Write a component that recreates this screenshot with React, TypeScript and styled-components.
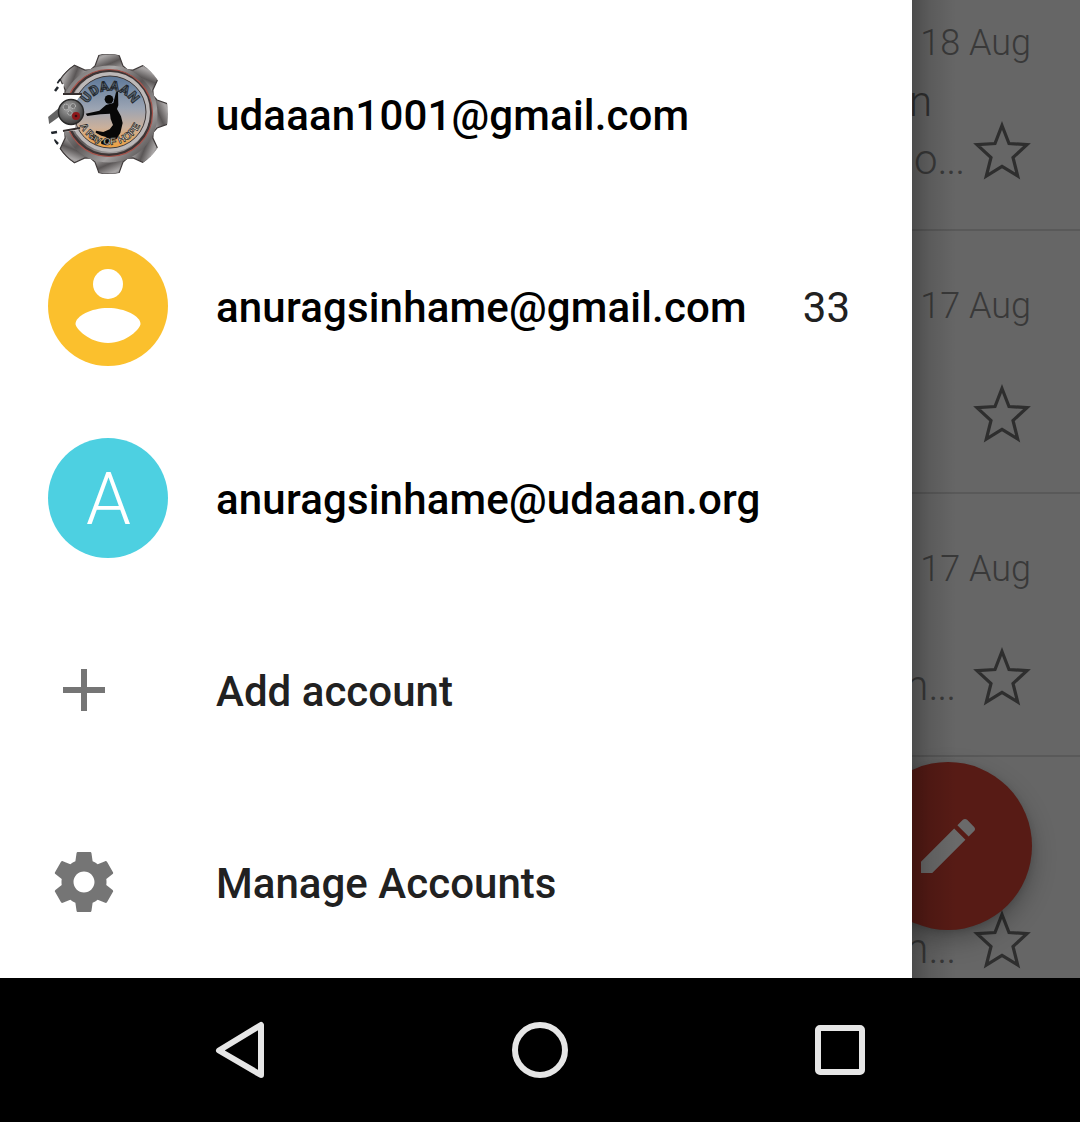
import React from "react";
import styled, { createGlobalStyle } from "styled-components";

const GlobalStyle = createGlobalStyle`
  *, *::before, *::after { box-sizing: border-box; }
  body { margin: 0; background: #fff; font-family: Roboto, "Liberation Sans", sans-serif; }
`;

const Screen = styled.div`
  width: 1080px;
  height: 1122px;
  display: flex;
  flex-direction: column;
  overflow: hidden;
`;

const Content = styled.main`
  display: flex;
  height: 978px;
`;

const Drawer = styled.nav`
  width: 912px;
  flex: none;
  padding-top: 18px;
  background: #fff;
`;

const Row = styled.div`
  display: flex;
  align-items: center;
  height: 192px;
  padding: 0 62px 0 48px;
`;

const IconSlot = styled.div`
  width: 168px;
  flex: none;
  display: flex;
  align-items: center;
  svg { display: block; overflow: visible; }
`;

const Avatar = styled.div<{ $color?: string }>`
  width: 120px;
  height: 120px;
  border-radius: 50%;
  overflow: hidden;
  display: flex;
  align-items: center;
  justify-content: center;
  background: ${(p) => p.$color || "transparent"};
`;

const Initial = styled.span`
  padding: 3px 0 0 1px;
  color: #fff;
  font-size: 72px;
  font-weight: 300;
  line-height: 84px;
`;

const Label = styled.span<{ $action?: boolean }>`
  flex: 1;
  padding-top: 3px;
  font-size: 42px;
  font-weight: 500;
  line-height: 50px;
  letter-spacing: ${(p) => (p.$action ? "0.03px" : "0.17px")};
  white-space: nowrap;
  color: ${(p) => (p.$action ? "#212121" : "#000")};
`;

const Count = styled.span`
  padding-top: 3px;
  font-size: 42px;
  line-height: 50px;
  color: #212121;
`;

const Inbox = styled.section`
  position: relative;
  width: 168px;
  height: 978px;
  overflow: hidden;
  background: #666;
`;

const MailList = styled.div`
  margin-top: -32px;
`;

const Mail = styled.article`
  height: 263px;
  padding: 53px 49px 0 0;
  border-bottom: 2px solid #595959;
  color: #393939;
  font-weight: 300;
  white-space: nowrap;
`;

const DateText = styled.div`
  height: 44px;
  font-size: 36px;
  line-height: 44px;
  text-align: right;
`;

const Subject = styled.div`
  height: 56px;
  padding: 12px 99px 0 0;
  display: flex;
  justify-content: flex-end;
  font-size: 42px;
  line-height: 50px;
  color: #303030;
`;

const SnippetLine = styled.div`
  display: flex;
  align-items: flex-start;
  justify-content: flex-end;
  height: 60px;
  svg { display: block; flex: none; }
`;

const Snippet = styled.span<{ $gap: number }>`
  padding-top: 14px;
  margin-right: ${(p) => p.$gap}px;
  font-size: 42px;
  line-height: 50px;
`;

const Dots = styled.span`
  letter-spacing: -1.2px;
`;

const Fab = styled.div`
  position: absolute;
  right: 48px;
  bottom: 48px;
  width: 168px;
  height: 168px;
  border-radius: 50%;
  background: #571b15;
  display: flex;
  align-items: center;
  justify-content: center;
  box-shadow: 0 10px 24px rgba(0, 0, 0, 0.28), 0 2px 6px rgba(0, 0, 0, 0.12);
`;

const EdgeShadow = styled.div`
  position: absolute;
  inset: 0 auto 0 0;
  width: 44px;
  background: linear-gradient(to right, rgba(0, 0, 0, 0.26), rgba(0, 0, 0, 0.11) 40%, rgba(0, 0, 0, 0));
`;

const NavBar = styled.footer`
  height: 144px;
  background: #000;
  display: flex;
  align-items: center;
  justify-content: space-between;
  padding: 0 204px;
`;

const Star = () => (
  <svg width="60" height="60" viewBox="0 0 60 60" fill="none" stroke="#2e2e2e" strokeWidth="3.2">
    <path d="M31 4.500 38 22.500 56 23.700 42 36.500 46.700 55 31 45.400 15.300 55 20 36.500 6 23.700 24 22.500Z" />
  </svg>
);

const GearAvatar = () => (
  <svg width="120" height="120" viewBox="0 0 120 120">
    <defs>
      <linearGradient id="metal" x1="0" y1="0" x2="1" y2="1">
        <stop offset="0" stopColor="#6b6868" />
        <stop offset=".25" stopColor="#aaa7a7" />
        <stop offset=".5" stopColor="#5a5656" />
        <stop offset=".75" stopColor="#a29f9f" />
        <stop offset="1" stopColor="#444040" />
      </linearGradient>
      <linearGradient id="sky" x1="0" y1="0" x2="0" y2="1">
        <stop offset="0" stopColor="#5d7899" />
        <stop offset=".45" stopColor="#9ba4b3" />
        <stop offset=".72" stopColor="#cbb09b" />
        <stop offset="1" stopColor="#f0a03f" />
      </linearGradient>
      <radialGradient id="ball" cx=".4" cy=".35" r=".7">
        <stop offset="0" stopColor="#aaa" />
        <stop offset="1" stopColor="#353535" />
      </radialGradient>
      <path id="arcTop" d="M36.500 62 A25.500 25.500 0 1 1 87.500 62" />
      <path id="arcBottom" d="M29 58 A33 33 0 0 0 95 58" />
    </defs>
    {[0, 45, 90, 135, 180, 225, 315].map((a) => (
      <path key={a} d="M51 1 Q61 -1 71 1 L75 12 84 20 H38 L47 12Z" transform={`rotate(${a} 61 60)`} fill="url(#metal)" stroke="#3f3a3a" strokeWidth="1.2" />
    ))}
    <circle cx="61" cy="60" r="42" fill="none" stroke="url(#metal)" strokeWidth="13" />
    <circle cx="61" cy="59" r="42" fill="none" stroke="#3e3535" strokeWidth="3" />
    <circle cx="61" cy="59" r="43.500" fill="none" stroke="#a6534b" strokeWidth="1.200" />
    <circle cx="62" cy="58" r="38" fill="none" stroke="#bcb8b8" strokeWidth="4" />
    <circle cx="62" cy="58" r="36" fill="url(#sky)" stroke="#3e3838" strokeWidth="1" />
    <path d="M0 32 16 30 15 40H34Q30 44 28 48L27 74 32 74 30 76 15 78 12 88H0Z" fill="#fff" />
    <path d="M15 40H34M15 77 32 74" stroke="#352f2f" strokeWidth="2" fill="none" />
    <path d="M0 63 11 54 15 60 4 68 1 70Z" fill="#646464" />
    <path d="M9 29 12 25M7 37 10 33M3 79 9 78M6 86 10 90" stroke="#20252b" strokeWidth="2.500" />
    <circle cx="23" cy="58" r="12.500" fill="url(#ball)" stroke="#292929" strokeWidth="1.500" />
    <g fill="#777" stroke="#c7c7c7" strokeWidth="1" strokeDasharray="1.200 .6">
      <circle cx="18" cy="53" r="2.800" />
      <circle cx="25" cy="52" r="2.500" />
      <circle cx="22" cy="59" r="2.200" />
    </g>
    <circle cx="28" cy="62" r="4" fill="#8d171b" />
    <circle cx="28" cy="62" r="1.300" fill="#321012" />
    <text fontFamily="Roboto, sans-serif" fontSize="13.500" fontWeight="900" fill="#56636f" stroke="#20252b" strokeWidth=".8" textAnchor="middle">
      <textPath href="#arcTop" startOffset="50%">UDAAAN</textPath>
    </text>
    <g transform="translate(-10 -10) scale(.33333)" fill="#070707">
      <circle cx="213" cy="166" r="13" />
      <path d="M234 145 240 143 241 184 237 195 249 217 254 237 247 267 235 286 216 289 204 304 190 300 189 293 207 280 190 275 173 266 174 260 196 264 215 256 225 243 218 225 216 209 187 211 148 216 143 209 184 200 204 183 226 177Z" />
    </g>
    <text fontFamily="Liberation Sans, sans-serif" fontSize="10" fontWeight="700" fill="#f4eadf" stroke="#151515" strokeWidth=".65" textAnchor="middle">
      <textPath href="#arcBottom" startOffset="50%">A Ray OF HOPE</textPath>
    </text>
  </svg>
);

const mails = [
  { date: "18 Aug", subject: "n", letter: "o", gap: 7 },
  { date: "17 Aug", subject: "", letter: "", gap: 0 },
  { date: "17 Aug", subject: "", letter: "n", gap: 16 },
  { date: "", subject: "", letter: "n", gap: 16 },
];

export default function App() {
  return (
    <>
      <GlobalStyle />
      <Screen>
        <Content>
          <Drawer>
            <Row>
              <IconSlot><Avatar><GearAvatar /></Avatar></IconSlot>
              <Label>udaaan1001@gmail.com</Label>
            </Row>
            <Row>
              <IconSlot>
                <Avatar $color="#fbc02d">
                  <svg width="120" height="120" viewBox="0 0 120 120" fill="#fff">
                    <circle cx="60" cy="38" r="15" />
                    <path d="M60 62C77 62 92.500 70 92.500 78C92.500 82 79 97 60 97S27.500 82 27.500 78C27.500 70 43 62 60 62Z" />
                  </svg>
                </Avatar>
              </IconSlot>
              <Label>anuragsinhame@gmail.com</Label>
              <Count>33</Count>
            </Row>
            <Row>
              <IconSlot><Avatar $color="#4dd0e1"><Initial>A</Initial></Avatar></IconSlot>
              <Label>anuragsinhame@udaaan.org</Label>
            </Row>
            <Row>
              <IconSlot>
                <svg width="72" height="72" viewBox="0 0 24 24" fill="#757575">
                  <path d="M19 13h-6v6h-2v-6H5v-2h6V5h2v6h6v2z" />
                </svg>
              </IconSlot>
              <Label $action>Add account</Label>
            </Row>
            <Row>
              <IconSlot>
                <svg width="72" height="72" viewBox="0 0 24 24" fill="#757575">
                  <path d="M19.430 12.980c.04-.32.07-.64.07-.98s-.03-.66-.07-.98l2.110-1.650c.19-.15.24-.42.12-.64l-2-3.460c-.12-.22-.39-.3-.61-.22l-2.490 1c-.52-.4-1.080-.73-1.690-.98l-.38-2.650C14.460 2.180 14.250 2 14 2h-4c-.25 0-.46.18-.49.42l-.38 2.650c-.61.25-1.170.59-1.690.98l-2.490-1c-.23-.09-.49 0-.61.22l-2 3.460c-.13.22-.07.49.12.64l2.110 1.650c-.04.32-.07.65-.07.98s.03.66.07.98l-2.110 1.650c-.19.15-.24.42-.12.64l2 3.460c.12.22.39.3.61.22l2.490-1c.52.4 1.080.73 1.690.98l.38 2.650c.03.24.24.42.49.42h4c.25 0 .46-.18.49-.42l.38-2.650c.61-.25 1.170-.59 1.690-.98l2.490 1c.23.09.49 0 .61-.22l2-3.460c.12-.22.07-.49-.12-.64l-2.110-1.650zM12 15.500c-1.930 0-3.500-1.570-3.500-3.500s1.570-3.500 3.500-3.500 3.500 1.570 3.500 3.500-1.570 3.500-3.500 3.500z" />
                </svg>
              </IconSlot>
              <Label $action>Manage Accounts</Label>
            </Row>
          </Drawer>
          <Inbox>
            <MailList>
              {mails.map((m, i) => (
                <Mail key={i}>
                  <DateText>{m.date}</DateText>
                  <Subject>{m.subject}</Subject>
                  <SnippetLine>
                    <Snippet $gap={m.gap}>
                      {m.letter}
                      {m.letter && <Dots>...</Dots>}
                    </Snippet>
                    <Star />
                  </SnippetLine>
                </Mail>
              ))}
            </MailList>
            <Fab>
              <svg width="72" height="72" viewBox="0 0 24 24" fill="#6a6a6a">
                <path d="M3 17.250V21h3.750L17.810 9.940l-3.750-3.750L3 17.250zM20.710 7.040c.39-.39.39-1.020 0-1.410l-2.340-2.340c-.39-.39-1.020-.39-1.410 0l-1.830 1.830 3.750 3.750 1.830-1.830z" />
              </svg>
            </Fab>
            <EdgeShadow />
          </Inbox>
        </Content>
        <NavBar>
          <svg width="72" height="72" viewBox="0 0 72 72" fill="none" stroke="#e6e6e6" strokeWidth="6" strokeLinejoin="round">
            <path d="M57 11V61L15 36.500Z" />
          </svg>
          <svg width="72" height="72" viewBox="0 0 72 72" fill="none" stroke="#e6e6e6" strokeWidth="6">
            <circle cx="36" cy="36" r="25" />
          </svg>
          <svg width="72" height="72" viewBox="0 0 72 72" fill="none" stroke="#e6e6e6" strokeWidth="6">
            <rect x="14" y="14" width="44" height="44" rx="2" />
          </svg>
        </NavBar>
      </Screen>
    </>
  );
}
